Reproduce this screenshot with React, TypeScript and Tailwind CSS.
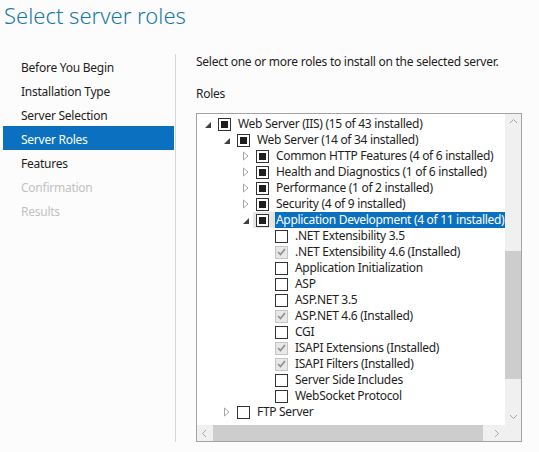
import React from "react";

type Check = "partial" | "off" | "done";

interface Row {
  level: number;
  label: string;
  check: Check;
  expander?: "open" | "closed";
  selected?: boolean;
}

const rows: Row[] = [
  { level: 0, label: "Web Server (IIS) (15 of 43 installed)", check: "partial", expander: "open" },
  { level: 1, label: "Web Server (14 of 34 installed)", check: "partial", expander: "open" },
  { level: 2, label: "Common HTTP Features (4 of 6 installed)", check: "partial", expander: "closed" },
  { level: 2, label: "Health and Diagnostics (1 of 6 installed)", check: "partial", expander: "closed" },
  { level: 2, label: "Performance (1 of 2 installed)", check: "partial", expander: "closed" },
  { level: 2, label: "Security (4 of 9 installed)", check: "partial", expander: "closed" },
  { level: 2, label: "Application Development (4 of 11 installed)", check: "partial", expander: "open", selected: true },
  { level: 3, label: ".NET Extensibility 3.5", check: "off" },
  { level: 3, label: ".NET Extensibility 4.6 (Installed)", check: "done" },
  { level: 3, label: "Application Initialization", check: "off" },
  { level: 3, label: "ASP", check: "off" },
  { level: 3, label: "ASP.NET 3.5", check: "off" },
  { level: 3, label: "ASP.NET 4.6 (Installed)", check: "done" },
  { level: 3, label: "CGI", check: "off" },
  { level: 3, label: "ISAPI Extensions (Installed)", check: "done" },
  { level: 3, label: "ISAPI Filters (Installed)", check: "done" },
  { level: 3, label: "Server Side Includes", check: "off" },
  { level: 3, label: "WebSocket Protocol", check: "off" },
  { level: 1, label: "FTP Server", check: "off", expander: "closed" },
];

const indent = ["pl-[5px]", "pl-[24px]", "pl-[43px]", "pl-[62px]"];

const navItems = [
  { label: "Before You Begin", state: "normal" },
  { label: "Installation Type", state: "normal" },
  { label: "Server Selection", state: "normal" },
  { label: "Server Roles", state: "active" },
  { label: "Features", state: "normal" },
  { label: "Confirmation", state: "disabled" },
  { label: "Results", state: "disabled" },
];

const CheckBox = ({ check }: { check: Check }) => {
  if (check === "partial") {
    return (
      <span className="w-[13px] h-[13px] shrink-0 border border-[#333] bg-white flex items-center justify-center">
        <span className="w-[7px] h-[7px] bg-[#1e1e1e]" />
      </span>
    );
  }
  if (check === "done") {
    return (
      <span className="w-[13px] h-[13px] shrink-0 border border-[#c4c4c4] bg-[#e8e8e8] flex items-center justify-center">
        <svg width="9" height="8" viewBox="0 0 9 8">
          <polyline points="1,4 3.5,6.5 8,1" fill="none" stroke="#8c8c8c" strokeWidth="1.6" />
        </svg>
      </span>
    );
  }
  return <span className="w-[13px] h-[13px] shrink-0 border border-[#333] bg-white" />;
};

const Expander = ({ kind }: { kind?: "open" | "closed" }) => (
  <span className="w-[16px] h-4 shrink-0 flex items-center">
    {kind === "open" && (
      <svg width="8" height="8" viewBox="0 0 8 8" className="ml-[2px] mt-[1px]">
        <polygon points="7,1 7,7 1,7" fill="#404040" />
      </svg>
    )}
    {kind === "closed" && (
      <svg width="6" height="10" viewBox="0 0 6 10" className="ml-[3px]">
        <polygon points="0.5,1 5,5 0.5,9" fill="none" stroke="#a6a6a6" strokeWidth="1" />
      </svg>
    )}
  </span>
);

const Chevron = ({ dir }: { dir: "up" | "down" | "left" | "right" }) => {
  const pts = {
    up: "1,5 4.5,1.5 8,5",
    down: "1,2 4.5,5.5 8,2",
    left: "5,1 1.5,4.5 5,8",
    right: "2,1 5.5,4.5 2,8",
  }[dir];
  return (
    <svg width="9" height="9" viewBox="0 0 9 9">
      <polyline points={pts} fill="none" stroke="#a8a8a8" strokeWidth="1" />
    </svg>
  );
};

export default function App() {
  return (
    <div
      className="w-[539px] h-[452px] bg-[#fcfcfc] text-[12px] tracking-[-0.25px] text-[#1e1e1e] overflow-hidden"
      style={{ fontFamily: '"Segoe UI", "Noto Sans", "Open Sans", sans-serif' }}
    >
      <div className="h-[54px] pl-[4px]">
        <h1 className="text-[22px] leading-[30px] font-light tracking-normal text-[#1979a9]">Select server roles</h1>
      </div>

      <div className="flex">
        <nav className="w-[176px] border-r border-[#d6d6d6] pl-[3px] pr-[1px]">
          {navItems.map((item) => (
            <div
              key={item.label}
              className={
                item.state === "active"
                  ? "h-6 pt-[6px] leading-4 pl-[18px] bg-[#0a70bf] text-white"
                  : item.state === "disabled"
                  ? "h-6 pt-[6px] leading-4 pl-[18px] text-[#c2c2c2]"
                  : "h-6 pt-[6px] leading-4 pl-[18px] text-[#1e1e1e]"
              }
            >
              {item.label}
            </div>
          ))}
        </nav>

        <main className="pl-[20px] flex flex-col">
          <p className="h-4 leading-4">Select one or more roles to install on the selected server.</p>
          <p className="h-4 leading-4 mt-[16px]">Roles</p>

          <div className="mt-[11px] w-[326px] h-[329px] border border-[#a3a3a3] bg-white flex flex-col">
            <div className="flex flex-1 min-h-0">
              <div className="flex-1 min-w-0 overflow-hidden pt-[2px] tracking-[-0.3px]">
                {rows.map((row) => (
                  <div key={row.label} className={`h-4 flex items-center whitespace-nowrap ${indent[row.level]}`}>
                    <Expander kind={row.expander} />
                    {row.selected ? (
                      <span className="h-4 flex items-center bg-[#e6e6e6] -ml-[3px] pl-[3px]">
                        <CheckBox check={row.check} />
                        <span className="ml-[6px] h-4 leading-4 px-[1px] bg-[#0a70bf] text-white">{row.label}</span>
                      </span>
                    ) : (
                      <>
                        <CheckBox check={row.check} />
                        <span className="ml-[7px] leading-4">{row.label}</span>
                      </>
                    )}
                  </div>
                ))}
              </div>
              <div className="w-[16px] bg-[#f0f0f0] flex flex-col">
                <div className="h-[16px] flex items-center justify-center">
                  <Chevron dir="up" />
                </div>
                <div className="flex-1 pt-[121px] pb-[28px]">
                  <div className="h-[128px] bg-[#cdcdcd]" />
                </div>
                <div className="h-[16px] flex items-center justify-center">
                  <Chevron dir="down" />
                </div>
              </div>
            </div>
            <div className="h-[16px] flex bg-[#f0f0f0]">
              <div className="w-[16px] flex items-center justify-center">
                <Chevron dir="left" />
              </div>
              <div className="w-[270px] bg-[#cdcdcd]" />
              <div className="flex-1" />
              <div className="w-[16px] flex items-center justify-center">
                <Chevron dir="right" />
              </div>
              <div className="w-[16px]" />
            </div>
          </div>
        </main>
      </div>
    </div>
  );
}
